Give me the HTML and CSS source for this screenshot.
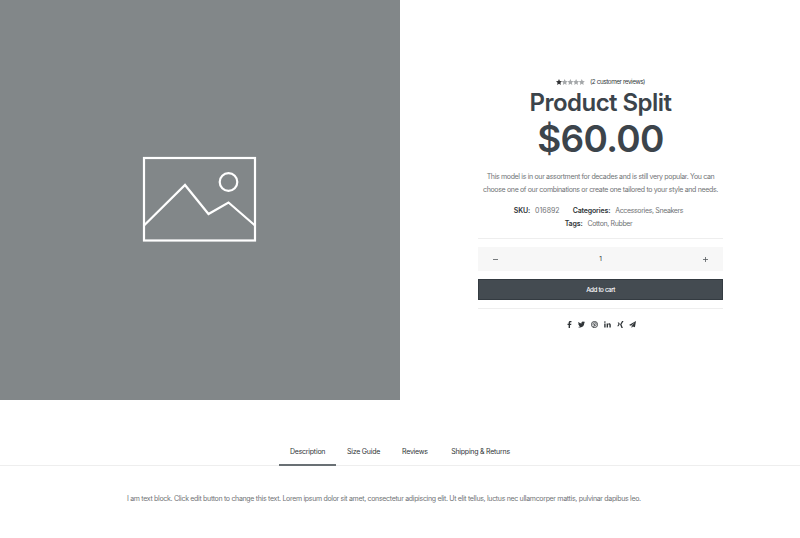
FILE: index.html
```html
<!DOCTYPE html>
<html lang="en">
<head>
<meta charset="utf-8">
<title>Product Split</title>
<link rel="stylesheet" href="styles.css">
</head>
<body>
<main class="product">
  <div class="media">
    <svg class="placeholder" width="115" height="86" viewBox="0 0 115 86" fill="none" stroke="#fff" stroke-width="2.2">
      <rect x="2" y="2" width="111" height="82.5"/>
      <circle cx="86.500" cy="26" r="8.8"/>
      <path d="M2 69.500 43 29 66.500 58 86.500 46.500 113 69.500"/>
    </svg>
  </div>
  <section class="summary">
    <div class="rating">
      <svg class="stars" width="29" height="6" viewBox="0 0 29 6">
        <defs><path id="star" d="M3 0 3.9 2 6 2.200 4.450 3.700 4.850 5.900 3 4.800 1.150 5.900 1.550 3.700 0 2.200 2.100 2Z"/></defs>
        <use href="#star" fill="#303133"/>
        <g fill="#a5a8aa"><use href="#star" x="5.700"/><use href="#star" x="11.400"/><use href="#star" x="17.100"/><use href="#star" x="22.800"/></g>
      </svg>
      <span class="count">(2 customer reviews)</span>
    </div>
    <h1 class="title">Product Split</h1>
    <p class="price">$60.00</p>
    <p class="intro">This model is in our assortment for decades and is still very popular. You can<br>choose one of our combinations or create one tailored to your style and needs.</p>
    <div class="meta">
      <div class="meta-row"><b>SKU:</b><span class="sku-value">016892</span><b>Categories:</b><span class="terms">Accessories, Sneakers</span></div>
      <div class="meta-row"><b>Tags:</b><span class="terms">Cotton, Rubber</span></div>
    </div>
    <form class="cart">
      <div class="quantity">
        <svg width="7" height="7" viewBox="0 0 7 7" stroke="#555a5e" stroke-width=".8"><path d="M1 3.500H6"/></svg>
        <span>1</span>
        <svg width="7" height="7" viewBox="0 0 7 7" stroke="#555a5e" stroke-width=".8"><path d="M1 3.500H6M3.500 1V6"/></svg>
      </div>
      <button class="add" type="button">Add to cart</button>
    </form>
    <div class="share">
      <svg viewBox="0 0 16 16"><path d="M6 16V9H3.500V6H6V4C6 1.300 7.500 0 9.800 0H12.500V3H10.500C9.500 3 9.200 3.500 9.200 4.300V6H12.300L11.800 9H9.200V16Z"/></svg>
      <svg viewBox="0 0 16 16"><path d="M16 3.200 14.400 4.800C14.500 10.500 10.500 15 5 15 3.200 15 1.400 14.500 0 13.500 1.800 13.600 3.500 13.100 4.800 12.100 3.300 12 2.200 11 1.800 9.700H3.200C1.600 9.200.6 7.900.6 6.300L2 6.700C.5 5.500.2 3.700 1.100 2.200 2.900 4.300 5.200 5.500 8 5.700 7.300 3.200 9 1.200 11.200 1.200 12.200 1.200 13 1.500 13.600 2.200L15.700 1.400 14.500 3.400Z"/></svg>
      <svg viewBox="0 0 16 16"><circle cx="8" cy="8" r="7" fill="none" stroke="#303538" stroke-width="2"/><path d="M4.800 9C3.700 6.500 5.500 4 8.300 4 11 4 12.300 5.700 11.800 8 11.300 10.400 9 11.200 7.900 10M8.300 6.500 6 15" fill="none" stroke="#303538" stroke-width="1.900"/></svg>
      <svg viewBox="0 0 16 16"><path d="M.5 5.500H3.700V15H.5ZM6 5.500H9V6.900C10.900 4.300 15.500 4.800 15.500 9V15H12.300V9.700C12.300 7 9.200 7.100 9.200 9.700V15H6Z"/><circle cx="2.100" cy="2.500" r="1.800"/></svg>
      <svg viewBox="0 0 16 16"><path d="M1.500 3.500H4.500L6.500 7 3.500 12H.5L3.500 7ZM11.500 0H15L10.200 8 13.500 16H10.200L7 8Z"/></svg>
      <svg viewBox="0 0 16 16"><path d="M16 0 13.500 14.500 8.700 12.500 6 16V11.500L13.500 3 4.500 10.800 0 9Z"/></svg>
    </div>
  </section>
</main>
<section class="details">
  <nav class="tabs">
    <a class="tab active">Description</a>
    <a class="tab">Size Guide</a>
    <a class="tab">Reviews</a>
    <a class="tab shipping">Shipping &amp; Returns</a>
  </nav>
  <p class="panel">I am text block. Click edit button to change this text. Lorem ipsum dolor sit amet, consectetur adipiscing elit. Ut elit tellus, luctus nec ullamcorper mattis, pulvinar dapibus leo.</p>
</section>
</body>
</html>
```
FILE: styles.css
```css
* { box-sizing: border-box; }
body { margin: 0; width: 800px; height: 538px; overflow: hidden; background: #fff; color: #303538; font: 7px/13px Inter, sans-serif; white-space: nowrap; }
h1, p { margin: 0; }
svg { display: block; }
.product { display: grid; grid-template-columns: 400px 400px; height: 400px; }
.media { background: #828789; padding: 156px 0 0 142px; }
.summary { width: 245px; margin-left: 78px; padding-top: 76px; text-align: center; }
.rating { display: flex; align-items: center; justify-content: center; gap: 5px; height: 11px; }
.stars { margin-top: 1px; }
.count { padding-top: 1px; font-size: 6.300px; letter-spacing: -.39px; }
.title { margin-top: 1px; color: #3c444b; font-size: 24px; line-height: 29px; font-weight: 600; letter-spacing: -.54px; }
.price { margin-top: 2px; color: #3c444b; font-size: 37px; line-height: 40px; font-weight: 600; letter-spacing: -.7px; }
.intro { margin-top: 11px; color: #707376; letter-spacing: -.335px; }
.meta { margin-top: 8px; height: 35px; border-bottom: 1px solid #eee; }
.meta-row { display: flex; justify-content: center; padding-right: 4px; color: #707376; }
.meta b { margin-right: 5px; color: #303538; font-weight: 600; letter-spacing: -.15px; }
.sku-value { margin-right: 13px; }
.terms { letter-spacing: -.36px; }
.cart { padding: 8px 0; border-bottom: 1px solid #eee; }
.quantity { display: flex; align-items: center; justify-content: space-between; height: 24px; padding: 0 14px; background: #f7f7f7; font-size: 6.500px; }
.add { display: block; width: 245px; height: 21px; margin-top: 8px; padding: 1px 0 0; border: 1px solid #343b41; background: #444b51; color: #fff; font: 500 6.300px/18px Inter, sans-serif; letter-spacing: -.5px; word-spacing: .4px; }
.share { display: flex; justify-content: center; gap: 5.700px; padding: 12px 0 0 1px; }
.share svg { width: 7px; height: 7px; fill: #303538; }
.details { padding-top: 39px; }
.tabs { display: flex; height: 27px; padding-left: 279px; border-bottom: 1px solid #eee; }
.tab { height: 27px; padding: 6px 11px 0; letter-spacing: -.24px; }
.active { width: 57px; border-bottom: 2px solid #697074; }
.shipping { margin-left: 1.500px; }
.panel { padding: 26px 0 0 127px; color: #707376; letter-spacing: -.314px; }
```
